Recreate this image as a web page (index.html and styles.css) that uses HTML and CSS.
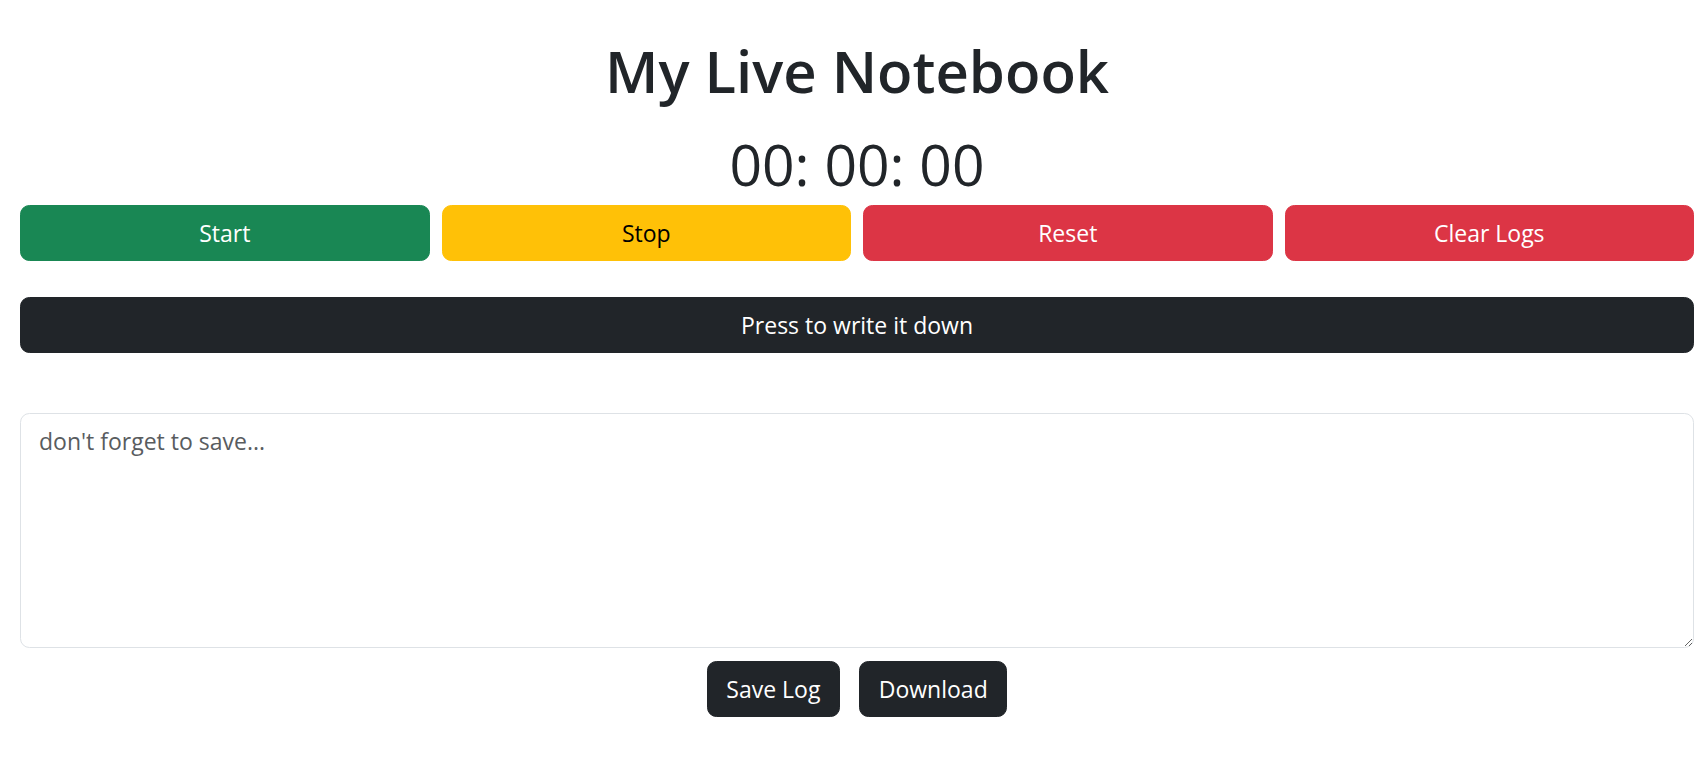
FILE: index.html
```html
<!DOCTYPE html>
<html lang="en">
<head>
<meta charset="utf-8">
<title>My Live Notebook</title>
<link rel="stylesheet" href="styles.css">
</head>
<body>
<main class="page">
  <h1 class="title">My Live Notebook</h1>
  <div class="timer">00: 00: 00</div>
  <div class="controls">
    <button class="btn btn-success">Start</button>
    <button class="btn btn-warning">Stop</button>
    <button class="btn btn-danger">Reset</button>
    <button class="btn btn-danger">Clear Logs</button>
  </div>
  <button class="btn btn-dark btn-block">Press to write it down</button>
  <textarea class="note" placeholder="don't forget to save..."></textarea>
  <div class="actions">
    <button class="btn btn-dark">Save Log</button>
    <button class="btn btn-dark">Download</button>
  </div>
</main>
</body>
</html>
```
FILE: styles.css
```css
* { box-sizing: border-box; }
html, body { margin: 0; padding: 0; background: #fff; }
body {
  font-family: "Open Sans", "Noto Sans", "Liberation Sans", sans-serif;
  color: #212529;
}
.page {
  padding: 34px 4px 0 20px;
  display: flex;
  flex-direction: column;
}
.title {
  margin: 0;
  text-align: center;
  font-size: 58px;
  line-height: 73px;
  font-weight: 600;
}
.timer {
  margin-top: 20px;
  text-align: center;
  font-size: 57px;
  line-height: 74px;
  font-weight: 400;
}
.controls {
  margin-top: 4px;
  display: flex;
  gap: 12px;
}
.controls .btn { flex: 1 1 0; }
.btn {
  font-family: inherit;
  font-size: 23px;
  line-height: 35px;
  height: 56px;
  padding: 9.5px 18.7px;
  border: 1px solid transparent;
  border-radius: 9.4px;
  color: #fff;
  cursor: pointer;
}
.btn-success { background: #198754; border-color: #198754; }
.btn-warning { background: #ffc107; border-color: #ffc107; color: #000; }
.btn-danger { background: #dc3545; border-color: #dc3545; }
.btn-dark { background: #212529; border-color: #212529; }
.btn-block { margin-top: 36px; width: 100%; }
.note {
  margin-top: 60px;
  width: 100%;
  height: 235px;
  font-family: inherit;
  font-size: 23px;
  line-height: 35px;
  padding: 10px 18px;
  border: 1px solid #dee2e6;
  border-radius: 9.4px;
  color: #212529;
  display: block;
}
.note::placeholder { color: #595c5f; opacity: 1; }
.actions {
  margin-top: 13px;
  display: flex;
  justify-content: center;
  gap: 19px;
}
```
